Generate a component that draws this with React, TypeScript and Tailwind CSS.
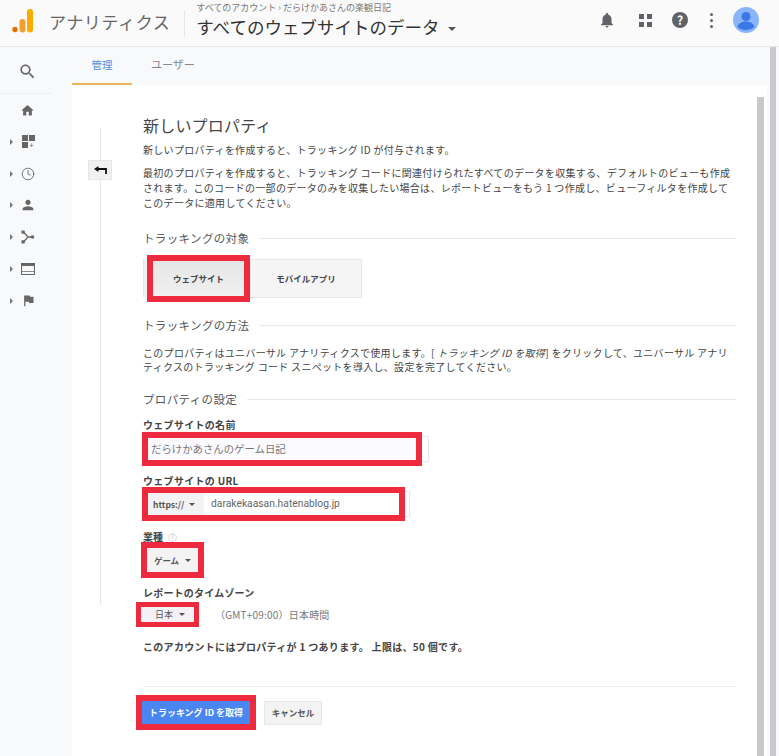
import React from "react";
import { Clock } from "lucide-react";

const font = { fontFamily: '"Noto Sans CJK JP", "Noto Sans", sans-serif' };

function Caret({ className = "" }: { className?: string }) {
  return <span className={`inline-block w-0 h-0 border-x-[3px] border-x-transparent border-t-[3px] border-t-[#555] ${className}`} />;
}

function Arrow() {
  return <span className="w-0 h-0 border-y-[3px] border-y-transparent border-l-[3px] border-l-[#777]" />;
}

function Mat({ d, size, fill = "#5f6368" }: { d: string; size: number; fill?: string }) {
  return (
    <svg width={size} height={size} viewBox="0 0 24 24" className="shrink-0">
      <path d={d} fill={fill} />
    </svg>
  );
}

function NavRow({ children }: { children: React.ReactNode }) {
  return (
    <div className="h-[31.8px] flex items-center pl-[10px] gap-[8px]">
      <span className="w-[3px] flex justify-center"><Arrow /></span>
      <span className="w-[14px] h-[14px] flex items-center justify-center">{children}</span>
    </div>
  );
}

function Section({ title }: { title: string }) {
  return (
    <div className="flex items-center gap-[10px]">
      <span className="text-[11.5px] leading-[16px] text-[#555] shrink-0 tracking-[0.35px]">{title}</span>
      <span className="flex-1 h-px bg-[#e8e8e8]" />
    </div>
  );
}

export default function App() {
  return (
    <div style={font} className="w-[779px] h-[756px] overflow-hidden bg-[#f8f9fb] flex flex-col text-[#444]">
      <header className="h-[47px] shrink-0 bg-[#fafafb] border-b border-[#e6e6ea] flex items-center">
        <svg width="22" height="24" viewBox="0 0 22 24" className="ml-[12px] mt-[-4px] shrink-0">
          <circle cx="3" cy="20.5" r="2.7" fill="#e37400" />
          <rect x="7.5" y="10" width="6" height="13.5" rx="3" fill="#f0a030" />
          <rect x="15" y="0" width="6" height="23.5" rx="3" fill="#f9ab00" />
        </svg>
        <span className="ml-[15px] mt-[-4px] text-[17px] text-[#666] tracking-[0.6px] leading-none">アナリティクス</span>
        <span className="ml-[14px] w-px h-[26px] bg-[#e6e6e6]" />
        <div className="ml-[11px] flex flex-col mt-[-6px]">
          <span className="text-[9px] leading-[12px] text-[#777]">すべてのアカウント › だらけかあさんの楽観日記</span>
          <span className="mt-[2px] flex items-center text-[17.5px] leading-[22px] text-[#333]">
            すべてのウェブサイトのデータ
            <Caret className="ml-[9px] mt-[3px] border-x-[4px] border-t-[4px]" />
          </span>
        </div>
        <div className="ml-auto flex items-center mt-[-6px]">
          <Mat size={18} d="M12 22c1.1 0 2-.9 2-2h-4c0 1.1.89 2 2 2zm6-6v-5c0-3.07-1.64-5.64-4.5-6.32V4c0-.83-.67-1.5-1.5-1.5s-1.5.67-1.5 1.5v.68C7.63 5.36 6 7.92 6 11v5l-2 2v1h16v-1l-2-2z" />
          <span className="ml-[23px] grid grid-cols-2 gap-[3px]">
            <span className="w-[5px] h-[5px] bg-[#5f6368]" />
            <span className="w-[5px] h-[5px] bg-[#5f6368]" />
            <span className="w-[5px] h-[5px] bg-[#5f6368]" />
            <span className="w-[5px] h-[5px] bg-[#5f6368]" />
          </span>
          <span className="ml-[20px] w-[16px] h-[16px] rounded-full bg-[#5f6368] text-white text-[12px] font-bold flex items-center justify-center leading-none">?</span>
          <span className="ml-[22px] w-[3px] flex flex-col gap-[3px]">
            <span className="w-[3px] h-[3px] rounded-full bg-[#5f6368]" />
            <span className="w-[3px] h-[3px] rounded-full bg-[#5f6368]" />
            <span className="w-[3px] h-[3px] rounded-full bg-[#5f6368]" />
          </span>
          <svg width="26" height="26" viewBox="0 0 26 26" className="ml-[20px] mr-[20px]">
            <circle cx="13" cy="13" r="13" fill="#8ab4f8" />
            <circle cx="13" cy="9.5" r="4.5" fill="#3b78e7" />
            <path d="M4.5 20c1-4 5-5.5 8.5-5.5s7.5 1.5 8.5 5.5a13 13 0 0 1-17 0z" fill="#3b78e7" />
          </svg>
        </div>
      </header>
      <div className="flex-1 flex min-h-0">
        <aside className="w-[72px] shrink-0 flex flex-col">
          <div className="h-[47px] mr-[20px] border-b border-[#eeeeef] flex items-center justify-center pt-[2px] pl-[2px]">
            <Mat size={19} fill="#666" d="M15.5 14h-.79l-.28-.27C15.41 12.59 16 11.11 16 9.5 16 5.91 13.09 3 9.5 3S3 5.91 3 9.5 5.91 16 9.5 16c1.61 0 3.09-.59 4.23-1.57l.27.28v.79l5 4.99L20.49 19l-4.99-5zm-6 0C7.01 14 5 11.99 5 9.5S7.01 5 9.5 5 14 7.01 14 9.5 11.99 14 9.5 14z" />
          </div>
          <div className="h-[31px] flex items-center pl-[20px] mt-[1px]">
            <Mat size={15} fill="#666" d="M10 20v-6h4v6h5v-8h3L12 3 2 12h3v8z" />
          </div>
          <NavRow>
            <span className="grid grid-cols-2 gap-[1px]">
              <span className="w-[6px] h-[6px] bg-[#666]" />
              <span className="w-[6px] h-[6px] bg-[#666]" />
              <span className="w-[6px] h-[6px] bg-[#666]" />
              <span className="text-[8px] leading-[6px] text-center text-[#666]">+</span>
            </span>
          </NavRow>
          <NavRow><Clock size={14} stroke="#666" strokeWidth={1.5} /></NavRow>
          <NavRow><Mat size={16} fill="#666" d="M12 12c2.21 0 4-1.79 4-4s-1.79-4-4-4-4 1.79-4 4 1.79 4 4 4zm0 2c-2.67 0-8 1.34-8 4v2h16v-2c0-2.66-5.33-4-8-4z" /></NavRow>
          <NavRow>
            <svg width="14" height="14" viewBox="0 0 14 14" className="shrink-0">
              <path d="M2.5 2 L7 7 L2.5 12 M7 7 H11.5" fill="none" stroke="#666" strokeWidth="1.3" />
              <rect x="0.5" y="0.5" width="3.2" height="3.2" fill="#666" />
              <rect x="0.5" y="10.3" width="3.2" height="3.2" fill="#666" />
              <circle cx="11.5" cy="7" r="1.8" fill="#666" />
            </svg>
          </NavRow>
          <NavRow>
            <span className="w-[14px] h-[12px] shrink-0 border border-[#666] border-t-[3px] flex items-end">
              <span className="w-full h-[3px] border-t border-[#888]" />
            </span>
          </NavRow>
          <NavRow><Mat size={15} fill="#666" d="M14.4 6L14 4H5v17h2v-7h5.6l.4 2h7V6z" /></NavRow>
        </aside>
        <main className="flex-1 min-w-0 flex flex-col">
          <nav className="h-[38px] shrink-0 flex text-[10.5px]">
            <span className="w-[60px] h-[38px] border-b-2 border-[#eeb25a] text-center leading-[35px] text-[#4a90d9]">管理</span>
            <span className="ml-[19px] text-[11px] leading-[35px] text-[#888]">ユーザー</span>
          </nav>
          <div className="flex-1 min-h-0 bg-white flex">
            <div className="relative ml-[28px] mt-[43px] h-[477px] w-px shrink-0 bg-[#e6e6e6]">
              <span className="absolute left-[-12px] top-[32px] w-[24px] h-[20px] bg-[#f1f1f1] border border-[#e6e6e6] flex items-center justify-center">
                <svg width="13" height="9" viewBox="0 0 13 9">
                  <path d="M12 8 V3 H3" fill="none" stroke="#111" strokeWidth="1.8" />
                  <path d="M0 3 L4.5 0 V6 Z" fill="#111" />
                </svg>
              </span>
            </div>
            <div className="ml-[42px] w-[593px] shrink-0 pt-[29px]">
              <h1 className="text-[16px] leading-[22px] text-[#444] tracking-[0.2px]">新しいプロパティ</h1>
              <p className="mt-[6px] text-[10px] leading-[16px] tracking-[0.3px]">新しいプロパティを作成すると、トラッキング ID が付与されます。</p>
              <p className="mt-[7px] text-[10px] leading-[15px] tracking-[0.3px]">
                最初のプロパティを作成すると、トラッキング コードに関連付けられたすべてのデータを収集する、デフォルトのビューも作成<br />
                されます。このコードの一部のデータのみを収集したい場合は、レポートビューをもう 1 つ作成し、ビューフィルタを作成して<br />
                このデータに適用してください。
              </p>
              <div className="mt-[20px]"><Section title="トラッキングの対象" /></div>
              <div className="mt-[12px] flex text-[8.5px] font-bold text-[#444]">
                <span className="w-[4px] my-[1px] h-[38px] bg-[#f0f0f0] border-l border-[#e6e6e6]" />
                <span className="w-[103px] h-[47px] border-[6px] border-[#ee2a3f] bg-gradient-to-b from-[#e6e6e6] to-[#f0f0f0] flex items-center justify-center mt-[-3px]">ウェブサイト</span>
                <span className="w-[112px] h-[39px] mt-[1px] bg-[#f5f5f5] border border-[#e6e6e6] flex items-center justify-center">モバイルアプリ</span>
              </div>
              <div className="mt-[15px]"><Section title="トラッキングの方法" /></div>
              <p className="mt-[13px] text-[10px] leading-[14px] tracking-[0.3px]">
                このプロパティはユニバーサル アナリティクスで使用します。[ <i>トラッキング ID を取得</i>] をクリックして、ユニバーサル アナリ<br />
                ティクスのトラッキング コード スニペットを導入し、設定を完了してください。
              </p>
              <div className="mt-[17px]"><Section title="プロパティの設定" /></div>
              <div className="mt-[11px] text-[10px] font-bold leading-[14px] text-[#444] tracking-[0.3px]">ウェブサイトの名前</div>
              <div className="relative mt-[0px] ml-[-1px] w-[280px] h-[34px] border-[6px] border-[#ee2a3f] bg-[#fbfaff] text-[10.4px] text-[#777] flex items-center pl-[3px] pb-[1px]">
                だらけかあさんのゲーム日記
                <span className="absolute right-[-13px] top-[-2px] h-[26px] w-[7px] border-y border-r border-[#e8e8e8]" />
              </div>
              <div className="mt-[8px] text-[10px] font-bold leading-[14px] text-[#444] tracking-[0.3px]">ウェブサイトの URL</div>
              <div className="relative mt-[-1px] ml-[-1px] w-[263px] h-[34px] border-[6px] border-[#ee2a3f] bg-white flex items-center text-[10.3px] text-[#666]">
                <span className="w-[56px] h-full bg-[#f3f3f3] flex items-center pl-[5px] gap-[5px] text-[8.5px] font-bold text-[#555]">https:// <Caret /></span>
                <span className="ml-[7px]" style={{ fontFamily: '"Roboto", sans-serif' }}>darakekaasan.hatenablog.jp</span>
                <span className="absolute right-[-11px] top-[-2px] h-[26px] w-[5px] border-y border-r border-[#e8e8e8]" />
              </div>
              <div className="mt-[9px] flex items-center gap-[5px] text-[10px] font-bold leading-[14px]">
                業種
                <span className="w-[9px] h-[9px] rounded-full border border-[#ddd] text-[6px] font-normal text-[#aaa] flex items-center justify-center">?</span>
              </div>
              <div className="mt-[-2px] ml-[-2px] w-[63px] h-[36px] border-[6px] border-[#ee2a3f] bg-[#f3f3f3] flex items-center justify-center gap-[6px] text-[8.5px] font-bold text-[#555]">
                ゲーム <Caret />
              </div>
              <div className="mt-[8px] text-[10px] font-bold leading-[14px] tracking-[0.2px]">レポートのタイムゾーン</div>
              <div className="mt-[2px] flex items-center">
                <span className="ml-[-7px] w-[63px] h-[25px] border-[5px] border-[#ee2a3f] bg-[#f3f1f6] flex items-center justify-center gap-[6px] pl-[5px] text-[9px] text-[#555]">
                  日本 <Caret />
                </span>
                <span className="ml-[16px] text-[10px] text-[#777] tracking-[0.2px]">（GMT+09:00）日本時間</span>
              </div>
              <p className="mt-[12px] text-[10px] leading-[16px] font-bold text-[#444] tracking-[0.3px]">このアカウントにはプロパティが 1 つあります。 上限は、50 個です。</p>
              <div className="mt-[31px] h-px bg-[#eeeeee]" />
              <div className="mt-[8px] flex items-center">
                <span className="ml-[-7px] w-[120px] h-[35px] border-[6px] border-[#ee2a3f] bg-[#4a86f0] flex items-center justify-center text-[9px] font-bold text-white">
                  トラッキング ID を取得
                </span>
                <span className="ml-[8px] w-[58px] h-[24px] bg-[#f3f3f3] border border-[#e8e8e8] flex items-center justify-center text-[8.5px] font-bold text-[#555]">キャンセル</span>
              </div>
            </div>
            <div className="ml-[21px] mr-[3px] mt-[12px] w-[7px] shrink-0 bg-[#c9c9cc]" />
          </div>
        </main>
        <div className="ml-[3px] mr-[3px] w-[6px] shrink-0 bg-[#c9c9cc]" />
      </div>
    </div>
  );
}
